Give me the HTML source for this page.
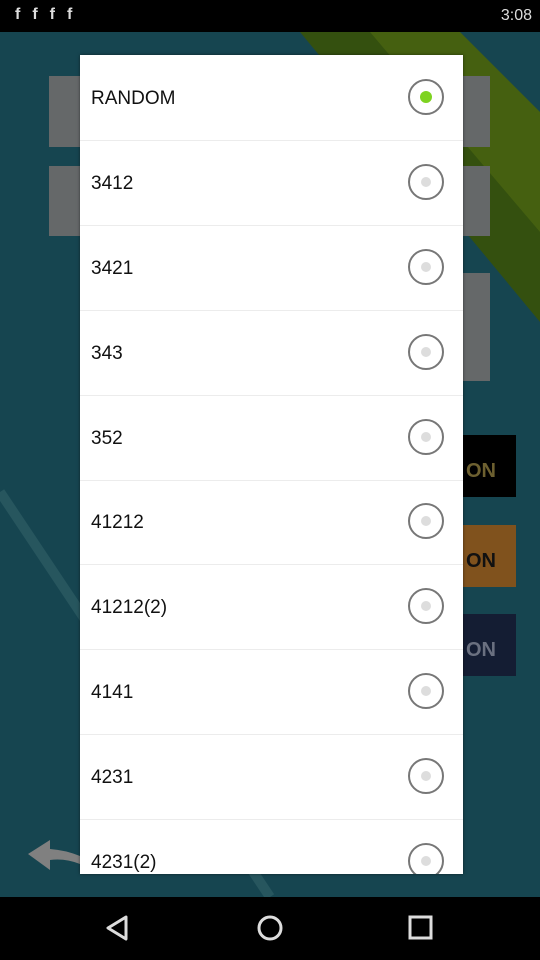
<!DOCTYPE html>
<html><head><style>
*{margin:0;padding:0;box-sizing:border-box}
html,body{width:540px;height:960px;overflow:hidden}
body{position:relative;background:#164550;font-family:"Liberation Sans",sans-serif}
.abs{position:absolute}
.row{position:absolute;left:0;width:383px;height:85px;border-bottom:1px solid #ececec}
.row span{position:absolute;left:11px;top:50%;transform:translateY(-45%);font-size:19px;color:#111}
.r{position:absolute;left:328px;top:50%;margin-top:-19px;width:36px;height:36px;border:2px solid #777;border-radius:50%;background:#fff}
.r i{position:absolute;left:11px;top:11px;width:10px;height:10px;border-radius:50%;background:#ddd}
.r i.g{background:#7ed321;left:10px;top:10px;width:12px;height:12px}
</style></head><body>
<div class="abs" style="left:0;top:0;width:540px;height:32px;background:#000;color:#ddd;font-size:16px">
<span class="abs" style="right:8px;top:7px">3:08</span>
<span class="abs" style="left:15px;top:6px;letter-spacing:12px;font-weight:bold;color:#ddd">ffff</span>
</div>
<svg class="abs" style="left:0;top:32px" width="540" height="865">
<polygon points="300,0 380,0 540,160 540,290" fill="#34500f"/>
<polygon points="370,0 460,0 540,80 540,200" fill="#456010"/>
<line x1="0" y1="460" x2="270" y2="865" stroke="#27565e" stroke-width="10"/>
<rect x="49" y="44" width="441" height="71" fill="#656869"/>
<rect x="49" y="134" width="441" height="70" fill="#656869"/>
<rect x="463" y="241" width="27" height="108" fill="#656869"/>
<rect x="463" y="403" width="53" height="62" fill="#000"/>
<rect x="463" y="493" width="53" height="62" fill="#80521d"/>
<rect x="463" y="582" width="53" height="62" fill="#141d33"/>
<text x="466" y="445" font-size="20" font-weight="bold" fill="#6d6030" font-family="Liberation Sans">ON</text>
<text x="466" y="535" font-size="20" font-weight="bold" fill="#111" font-family="Liberation Sans">ON</text>
<text x="466" y="624" font-size="20" font-weight="bold" fill="#6a7080" font-family="Liberation Sans">ON</text>
<path d="M28,822 L50,808 L50,817 Q65,818 80,824 L80,832 Q65,826 50,828 L50,838 Z" fill="#808080"/>
</svg>
<div class="abs" style="left:80px;top:55px;width:383px;height:819px;background:#fff;overflow:hidden;box-shadow:0 0 3px rgba(0,0,0,.5)">
<div class="row" style="top:1px"><span>RANDOM</span><div class="r"><i class="g"></i></div></div>
<div class="row" style="top:86px"><span>3412</span><div class="r"><i></i></div></div>
<div class="row" style="top:171px"><span>3421</span><div class="r"><i></i></div></div>
<div class="row" style="top:256px"><span>343</span><div class="r"><i></i></div></div>
<div class="row" style="top:341px"><span>352</span><div class="r"><i></i></div></div>
<div class="row" style="top:425px"><span>41212</span><div class="r"><i></i></div></div>
<div class="row" style="top:510px"><span>41212(2)</span><div class="r"><i></i></div></div>
<div class="row" style="top:595px"><span>4141</span><div class="r"><i></i></div></div>
<div class="row" style="top:680px"><span>4231</span><div class="r"><i></i></div></div>
<div class="row" style="top:765px"><span>4231(2)</span><div class="r"><i></i></div></div>
</div>
<div class="abs" style="left:0;top:897px;width:540px;height:63px;background:#000">
<svg width="540" height="63">
<path d="M126,20 L108,31 L126,42 Z" fill="none" stroke="#ddd" stroke-width="3" stroke-linejoin="round"/>
<circle cx="270" cy="31" r="11" fill="none" stroke="#ddd" stroke-width="3"/>
<rect x="410" y="20" width="21" height="21" fill="none" stroke="#ddd" stroke-width="3"/></svg>
</div>
</body></html>
